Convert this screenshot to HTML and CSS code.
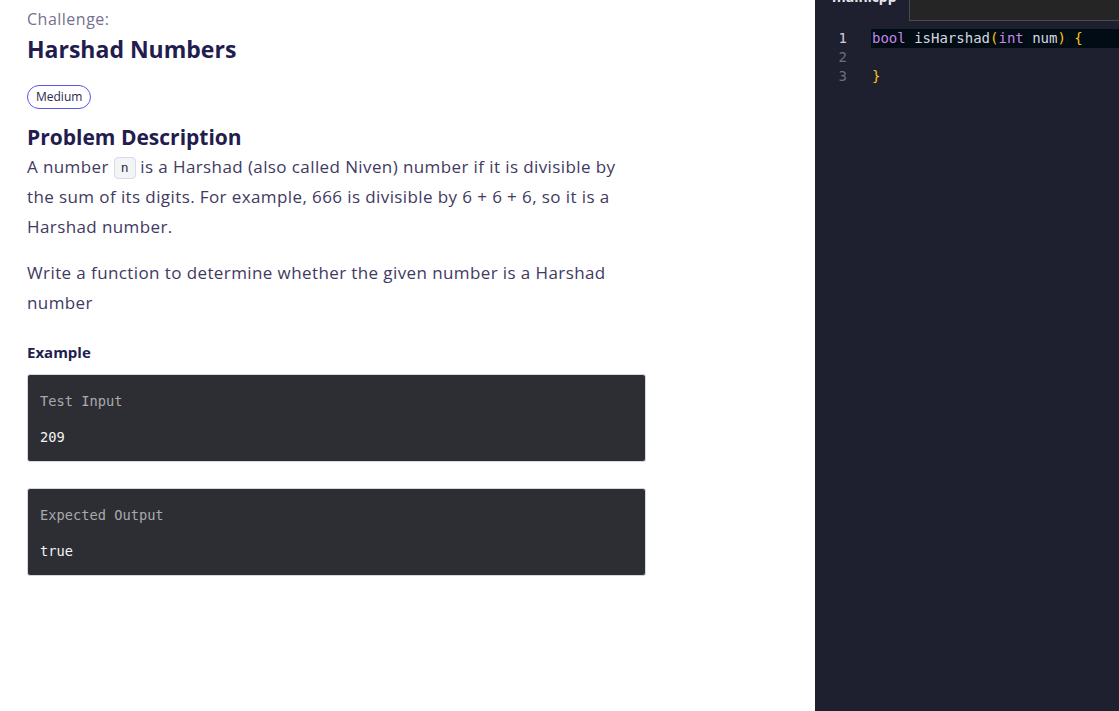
FILE: index.html
```html
<!DOCTYPE html>
<html>
<head>
<meta charset="utf-8">
<link rel="stylesheet" href="styles.css">
</head>
<body>
<div class="page">
  <main class="problem">
    <div class="kicker">Challenge:</div>
    <h1 class="title">Harshad Numbers</h1>
    <span class="badge">Medium</span>
    <h2 class="section">Problem Description</h2>
    <p class="para">A number <code class="inline">n</code> is a Harshad (also called Niven) number if it is divisible by the sum of its digits. For example, 666 is divisible by 6 + 6 + 6, so it is a Harshad number.</p>
    <p class="para">Write a function to determine whether the given number is a Harshad number</p>
    <h3 class="sub">Example</h3>
    <div class="block">
      <div class="block-label">Test Input</div>
      <div class="block-value">209</div>
    </div>
    <div class="block">
      <div class="block-label">Expected Output</div>
      <div class="block-value">true</div>
    </div>
  </main>
  <aside class="editor">
    <div class="tabs">
      <div class="tab active"><span class="tab-text">main.cpp</span></div>
      <div class="tab-rest"></div>
    </div>
    <div class="code">
      <div class="line current"><span class="ln">1</span><span class="src"><span class="kw">bool</span> isHarshad<span class="br">(</span><span class="kw">int</span> num<span class="br">)</span> <span class="br">{</span></span></div>
      <div class="line"><span class="ln">2</span><span class="src"></span></div>
      <div class="line"><span class="ln">3</span><span class="src"><span class="br">}</span></span></div>
    </div>
  </aside>
</div>
</body>
</html>
```

FILE: styles.css
```css
* { box-sizing: border-box; }
html, body { margin: 0; padding: 0; height: 100%; }
body {
  font-family: "Open Sans", Lato, "Noto Sans", sans-serif;
  background: #ffffff;
  overflow: hidden;
}
.page {
  display: flex;
  height: 711px;
}
.problem {
  width: 815px;
  flex: none;
  padding: 9px 169px 0 27px;
  display: flex;
  flex-direction: column;
  align-items: flex-start;
}
.kicker {
  font-size: 16px;
  line-height: 20px;
  color: #76708f;
  letter-spacing: 0.5px;
}
.title {
  margin: 5px 0 0;
  font-size: 23px;
  line-height: 30px;
  font-weight: 700;
  color: #221c4f;
}
.badge {
  margin-top: 21px;
  height: 24px;
  padding: 0 8px;
  border: 1px solid #5a57e6;
  border-radius: 12px;
  font-size: 12px;
  line-height: 22px;
  color: #2c2750;
}
.section {
  margin: 14px 0 0;
  font-size: 21px;
  line-height: 28px;
  font-weight: 700;
  color: #221c4f;
}
.para {
  margin: 1px 0 0;
  max-width: 612px;
  font-size: 17px;
  line-height: 30px;
  color: #3f3a62;
  letter-spacing: 0.4px;
}
.para + .para { margin-top: 16px; }
.inline {
  display: inline-block;
  font-family: "DejaVu Sans Mono", monospace;
  font-size: 13px;
  line-height: 20px;
  padding: 0 6px;
  background: #f3f4f7;
  border: 1px solid #d9dce3;
  border-radius: 4px;
  color: #2d2d3a;
  vertical-align: 1px;
  letter-spacing: 0;
}
.sub {
  margin: 24px 0 0;
  font-size: 15px;
  line-height: 20px;
  font-weight: 700;
  color: #221c4f;
}
.block {
  align-self: stretch;
  margin-top: 12px;
  height: 88px;
  padding: 16px 12px;
  background: #2d2e33;
  border: 1px solid #d3d7de;
  border-radius: 3px;
  font-family: "DejaVu Sans Mono", monospace;
  font-size: 13.7px;
  line-height: 20px;
  display: flex;
  flex-direction: column;
  gap: 16px;
}
.block + .block { margin-top: 26px; }
.block-label { color: #a9a9ad; }
.block-value { color: #f4f4f4; }

.editor {
  flex: 1;
  background: #1e2030;
  display: flex;
  flex-direction: column;
}
.tabs {
  display: flex;
  height: 21px;
}
.tab {
  width: 94px;
  overflow: hidden;
  padding-left: 17px;
}
.tab-text {
  display: block;
  margin-top: -13px;
  font-family: "Open Sans", sans-serif;
  font-weight: 700;
  font-size: 14px;
  line-height: 20px;
  color: #e6e6ee;
}
.tab-rest {
  flex: 1;
  margin-top: -1px;
  background: #252526;
  border: 1px solid #4a4a4e;
  border-right: none;
}
.code {
  margin-top: 8px;
  font-family: "DejaVu Sans Mono", monospace;
  font-size: 14px;
  line-height: 19px;
}
.line {
  display: flex;
  height: 19px;
}
.ln {
  width: 32px;
  text-align: right;
  color: #6b6f7a;
  flex: none;
}
.current .ln { color: #d0d0d6; }
.src {
  flex: 1;
  margin-left: 24px;
  padding-left: 1px;
  color: #d6d8e0;
  white-space: pre;
}
.current .src { background: #020c14; }
.kw { color: #c586e8; }
.br { color: #f5c518; }
```
